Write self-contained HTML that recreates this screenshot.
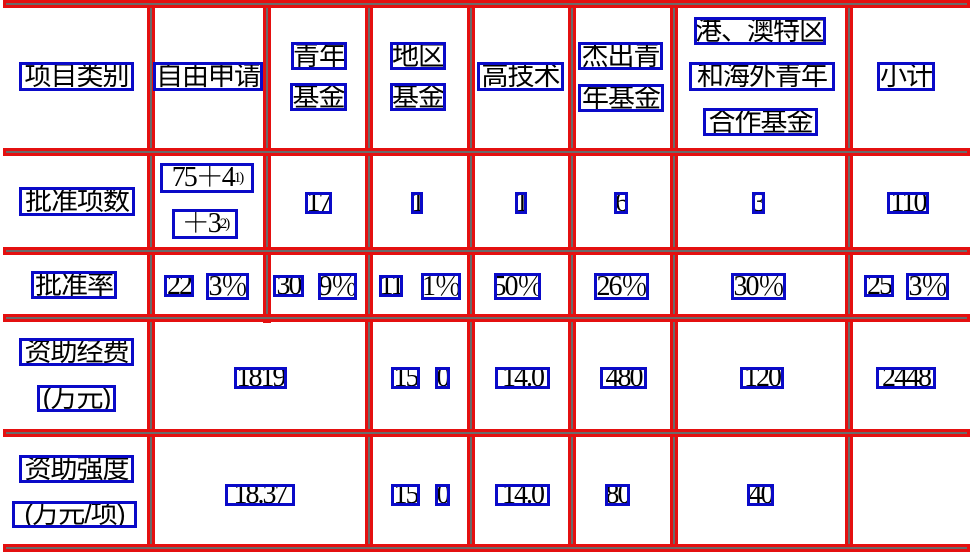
<!DOCTYPE html>
<html><head><meta charset="utf-8"><style>
body{margin:0;width:971px;height:551px;background:#fff;position:relative;overflow:hidden}
.h{position:absolute;left:3px;width:967px;height:8px;border:3px solid #e41010;background:#6a6a6a;box-sizing:border-box}
.v{position:absolute;top:0;height:551px;width:8px;border:3px solid #e41010;background:#6a6a6a;box-sizing:border-box}
.b{position:absolute;border:3px solid #0a0ac8;box-sizing:border-box;display:flex;align-items:center;justify-content:center;white-space:nowrap;overflow:hidden;color:#000;line-height:1}
.c{font-family:"Liberation Sans","Noto Sans CJK SC",sans-serif;font-size:27px;letter-spacing:-1px}
.n{font-family:"Liberation Serif","Noto Serif CJK SC",serif;font-size:28px;letter-spacing:-2px}
sup{font-size:15px;vertical-align:10px}
</style></head><body>
<div class="v" style="left:147px"></div>
<div class="v" style="left:263px;height:323px"></div>
<div class="v" style="left:365px"></div>
<div class="v" style="left:467px"></div>
<div class="v" style="left:568px"></div>
<div class="v" style="left:670px"></div>
<div class="v" style="left:845px"></div>
<div class="h" style="top:0"></div>
<div class="h" style="top:148px"></div>
<div class="h" style="top:247px"></div>
<div class="h" style="top:314px"></div>
<div class="h" style="top:429px"></div>
<div class="h" style="top:544px"></div>

<div class="b c" style="left:19px;top:62px;width:115px;height:29px">项目类别</div>
<div class="b c" style="left:153px;top:62px;width:110px;height:29px">自由申请</div>
<div class="b c" style="left:291px;top:42px;width:56px;height:28px">青年</div>
<div class="b c" style="left:290px;top:83px;width:57px;height:28px">基金</div>
<div class="b c" style="left:390px;top:42px;width:56px;height:28px">地区</div>
<div class="b c" style="left:390px;top:83px;width:56px;height:28px">基金</div>
<div class="b c" style="left:477px;top:62px;width:87px;height:29px">高技术</div>
<div class="b c" style="left:578px;top:42px;width:85px;height:28px">杰出青</div>
<div class="b c" style="left:578px;top:84px;width:86px;height:28px">年基金</div>
<div class="b c" style="left:694px;top:17px;width:132px;height:28px">港、澳特区</div>
<div class="b c" style="left:689px;top:62px;width:146px;height:29px">和海外青年</div>
<div class="b c" style="left:703px;top:108px;width:115px;height:28px">合作基金</div>
<div class="b c" style="left:877px;top:62px;width:58px;height:29px">小计</div>

<div class="b c" style="left:19px;top:187px;width:116px;height:29px">批准项数</div>
<div class="b n" style="left:160px;top:163px;width:94px;height:30px">75＋4<sup>1)</sup></div>
<div class="b n" style="left:172px;top:209px;width:66px;height:30px">＋3<sup>2)</sup></div>
<div class="b n" style="left:305px;top:192px;width:27px;height:22px">17</div>
<div class="b n" style="left:411px;top:192px;width:12px;height:22px">1</div>
<div class="b n" style="left:515px;top:192px;width:12px;height:22px">1</div>
<div class="b n" style="left:614px;top:192px;width:14px;height:22px">6</div>
<div class="b n" style="left:752px;top:192px;width:13px;height:22px">3</div>
<div class="b n" style="left:887px;top:192px;width:42px;height:22px">110</div>

<div class="b c" style="left:31px;top:271px;width:86px;height:28px">批准率</div>
<div class="b n" style="left:164px;top:275px;width:30px;height:22px">22</div>
<div class="b n" style="left:206px;top:273px;width:43px;height:27px">3％</div>
<div class="b n" style="left:273px;top:275px;width:31px;height:22px">30</div>
<div class="b n" style="left:318px;top:273px;width:39px;height:27px">9％</div>
<div class="b n" style="left:379px;top:275px;width:24px;height:22px">11</div>
<div class="b n" style="left:421px;top:273px;width:40px;height:27px">1％</div>
<div class="b n" style="left:494px;top:273px;width:47px;height:27px">50％</div>
<div class="b n" style="left:594px;top:273px;width:55px;height:27px">26％</div>
<div class="b n" style="left:731px;top:273px;width:55px;height:27px">30％</div>
<div class="b n" style="left:864px;top:275px;width:30px;height:22px">25</div>
<div class="b n" style="left:906px;top:273px;width:43px;height:27px">3％</div>

<div class="b c" style="left:19px;top:338px;width:115px;height:28px">资助经费</div>
<div class="b c" style="left:37px;top:385px;width:79px;height:27px">(万元)</div>
<div class="b n" style="left:234px;top:367px;width:53px;height:22px">1819</div>
<div class="b n" style="left:391px;top:367px;width:29px;height:22px">15</div>
<div class="b n" style="left:435px;top:367px;width:15px;height:22px">0</div>
<div class="b n" style="left:495px;top:367px;width:55px;height:22px">14.0</div>
<div class="b n" style="left:600px;top:367px;width:47px;height:22px">480</div>
<div class="b n" style="left:740px;top:367px;width:44px;height:22px">120</div>
<div class="b n" style="left:876px;top:367px;width:60px;height:22px">2448</div>

<div class="b c" style="left:19px;top:455px;width:115px;height:28px">资助强度</div>
<div class="b c" style="left:12px;top:501px;width:125px;height:27px">(万元/项)</div>
<div class="b n" style="left:225px;top:484px;width:70px;height:22px">18.37</div>
<div class="b n" style="left:391px;top:484px;width:29px;height:22px">15</div>
<div class="b n" style="left:435px;top:484px;width:15px;height:22px">0</div>
<div class="b n" style="left:495px;top:484px;width:55px;height:22px">14.0</div>
<div class="b n" style="left:605px;top:484px;width:25px;height:22px">80</div>
<div class="b n" style="left:747px;top:484px;width:27px;height:22px">40</div>
</body></html>
